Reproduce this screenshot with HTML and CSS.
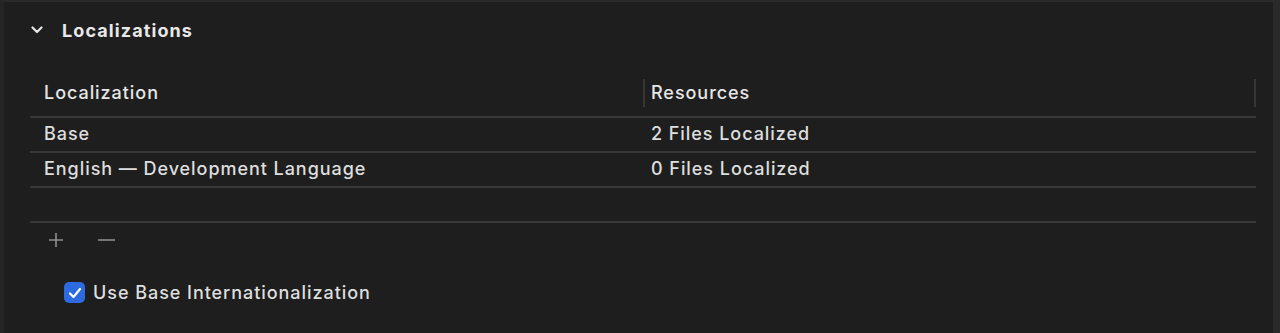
FILE: index.html
```html
<!DOCTYPE html>
<html lang="en">
<head>
    <meta charset="UTF-8">
    <title>Localizations</title>
    <link rel="stylesheet" href="styles.css">
</head>
<body>
    <div class="pane">
        <div class="section-head">
            <svg class="chevron" width="12" height="8" viewBox="0 0 12 8">
                <path d="M1.5 1.5 L6 6 L10.5 1.5" fill="none" stroke="#e6e6e6" stroke-width="2.2" stroke-linecap="round" stroke-linejoin="round"/>
            </svg>
            <h2>Localizations</h2>
        </div>

        <div class="table">
            <div class="row head-row">
                <div class="cell col-a">Localization</div>
                <div class="cell col-b">Resources</div>
            </div>
            <div class="row">
                <div class="cell col-a">Base</div>
                <div class="cell col-b">2 Files Localized</div>
            </div>
            <div class="row">
                <div class="cell col-a">English — Development Language</div>
                <div class="cell col-b">0 Files Localized</div>
            </div>
            <div class="row empty-row"></div>
        </div>

        <div class="toolbar">
            <span class="tool-btn">
                <svg width="16" height="16" viewBox="0 0 16 16"><path d="M8 1 V15 M1 8 H15" stroke="#8e8e8e" stroke-width="1.6"/></svg>
            </span>
            <span class="tool-btn">
                <svg width="19" height="16" viewBox="0 0 19 16"><path d="M1 8 H18" stroke="#8e8e8e" stroke-width="1.6"/></svg>
            </span>
        </div>

        <label class="check">
            <span class="box">
                <svg width="14" height="12" viewBox="0 0 14 12"><path d="M2 6.5 L5.5 10 L12 2" fill="none" stroke="#fff" stroke-width="2.2" stroke-linecap="round" stroke-linejoin="round"/></svg>
            </span>
            Use Base Internationalization
        </label>
    </div>
</body>
</html>
```

FILE: styles.css
```css
* {
    margin: 0;
    padding: 0;
    box-sizing: border-box;
}

body {
    background: #1e1e1e;
    font-family: Inter, "Noto Sans", sans-serif;
    color: #dedede;
    height: 333px;
    overflow: hidden;
}

.pane {
    height: 333px;
    border-top: 2px solid #2a2a2a;
    border-left: 4px solid #252525;
    border-right: 7px solid #2a2a2a;
    padding: 0 17px 0 26px;
}

.section-head {
    display: flex;
    align-items: center;
    height: 56px;
    padding-left: 1px;
    gap: 19px;
}

.section-head h2 {
    font-size: 18px;
    font-weight: 700;
    letter-spacing: 1.1px;
    color: #e8e8e8;
}

.table {
    margin-top: 18px;
}

.row {
    display: flex;
    height: 35px;
    align-items: center;
    border-bottom: 2px solid #383838;
}

.row .cell {
    padding-bottom: 3px;
}

.head-row {
    height: 42px;
    padding-bottom: 4px;
}

.cell {
    font-size: 18px;
    font-weight: 500;
    letter-spacing: 0.95px;
    padding-left: 14px;
}

.col-a {
    width: 613px;
}

.col-b {
    flex: 1;
    padding-left: 8px;
}

.head-row .col-b {
    border-left: 2px solid #363636;
    border-right: 2px solid #363636;
    height: 28px;
    display: flex;
    align-items: center;
    padding-left: 6px;
    padding-bottom: 0;
    margin-bottom: 3px;
}

.head-row .cell {
    color: #e6e6e6;
}

.toolbar {
    display: flex;
    align-items: center;
    height: 34px;
    padding-left: 18px;
    gap: 33px;
}

.tool-btn {
    display: flex;
}

.check {
    display: flex;
    align-items: center;
    gap: 8px;
    margin-top: 25px;
    padding-left: 34px;
    font-size: 18px;
    font-weight: 500;
    letter-spacing: 0.95px;
    color: #dedede;
}

.box {
    width: 21px;
    height: 21px;
    border-radius: 5px;
    background: #2d6ae0;
    display: flex;
    align-items: center;
    justify-content: center;
}
```
